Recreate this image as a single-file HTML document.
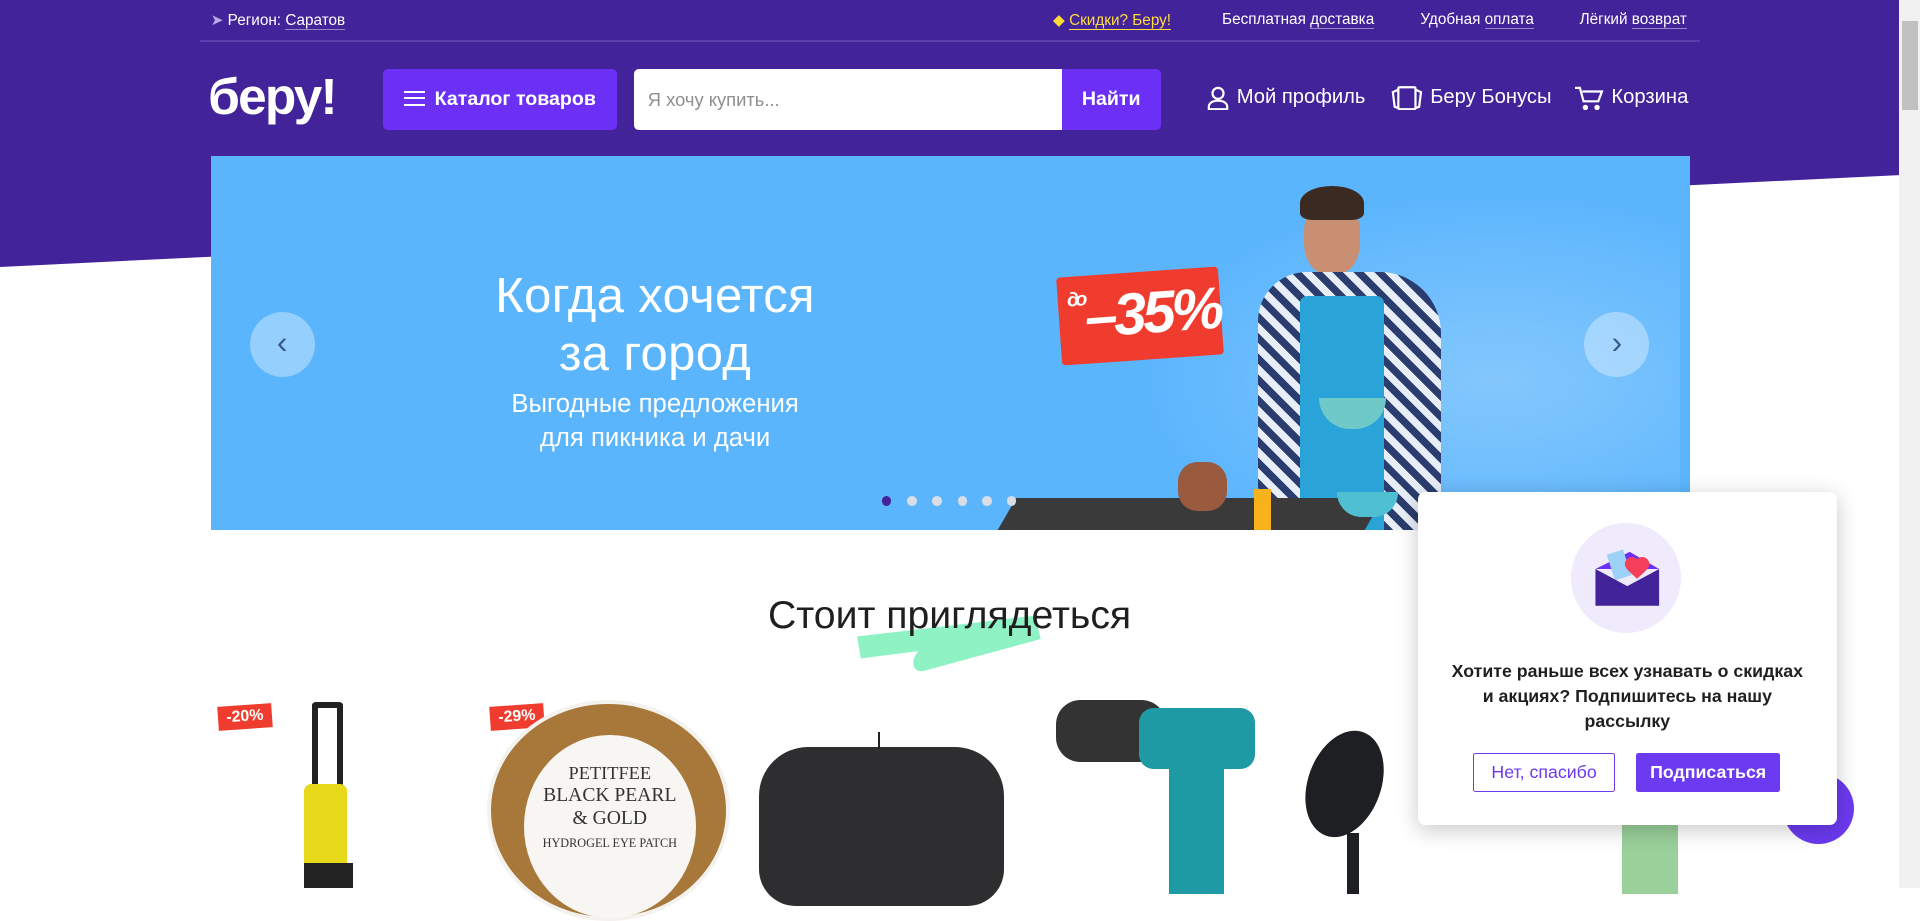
<!DOCTYPE html>
<html><head><meta charset="utf-8"><style>
html{zoom:1.22449}
*{box-sizing:border-box;margin:0;padding:0}
body{width:1568px;height:725px;overflow:hidden;background:#fff;font-family:"Liberation Sans","DejaVu Sans",sans-serif;position:relative;color:#fff}
.abs{position:absolute}
.purple{left:0;top:0;width:1551px;height:220px;background:#42239a;clip-path:polygon(0 0,100% 0,100% 143px,0 218px)}
.top{top:9px;font-size:12.5px;white-space:nowrap}
.top u{text-decoration:none;border-bottom:1px solid rgba(255,255,255,.45)}
.nav{top:70px;font-size:16.5px;display:flex;align-items:center;gap:6px;white-space:nowrap}
.dot{width:8px;height:8px;border-radius:50%;background:#d9dde4;top:405px}
.arrow{width:53px;height:53px;border-radius:50%;background:rgba(255,255,255,.35);top:255px;color:#3c5b8c;font-size:26px;text-align:center;line-height:50px}
</style></head><body>
<div class="abs purple"></div>
<div class="abs" style="left:163px;top:33px;width:1225px;height:1px;background:#5a3ead"></div>

<div class="abs top" style="left:172px"><span style="color:#b9a9e6">➤</span> Регион: <u>Саратов</u></div>
<div class="abs top" style="left:860px;color:#ffdc3c"><span>◆</span> <u style="border-color:#ffdc3c">Скидки? Беру!</u></div>
<div class="abs top" style="left:998px">Бесплатная <u>доставка</u></div>
<div class="abs top" style="left:1160px">Удобная <u>оплата</u></div>
<div class="abs top" style="left:1290px">Лёгкий <u>возврат</u></div>

<div class="abs" style="left:170px;top:54px;font-size:42px;font-weight:bold;letter-spacing:-1.5px">беру!</div>
<div class="abs" style="left:313px;top:56px;width:191px;height:50px;background:#6c2ff6;border-radius:4px;font-size:16px;font-weight:bold;line-height:50px;padding-left:17px">
<span style="display:inline-block;width:17px;height:12px;border-top:2px solid #fff;border-bottom:2px solid #fff;position:relative;vertical-align:-1px;margin-right:8px"><i style="position:absolute;left:0;top:3px;width:17px;height:2px;background:#fff"></i></span>Каталог товаров</div>
<div class="abs" style="left:518px;top:56px;width:350px;height:50px;background:#fff;border-radius:4px 0 0 4px;color:#8f8f8f;font-size:15px;line-height:50px;padding-left:11px">Я хочу купить...</div>
<div class="abs" style="left:867px;top:56px;width:81px;height:50px;background:#6c2ff6;border-radius:0 4px 4px 0;font-size:16px;font-weight:bold;line-height:50px;text-align:center">Найти</div>

<div class="abs nav" style="left:986px"><svg width="18" height="20" viewBox="0 0 18 20" fill="none" stroke="#fff" stroke-width="1.8"><circle cx="9" cy="6" r="4.5"/><path d="M1.5 19v-2c0-3 3-5 7.5-5s7.5 2 7.5 5v2z"/></svg>Мой профиль</div>
<div class="abs nav" style="left:1136px"><svg width="26" height="20" viewBox="0 0 26 20" fill="none" stroke="#fff" stroke-width="1.8"><rect x="6" y="1" width="14" height="18" rx="1"/><path d="M6 3L1.5 5l1.5 12 3 1M20 3l4.5 2-1.5 12-3 1"/></svg>Беру Бонусы</div>
<div class="abs nav" style="left:1286px"><svg width="24" height="20" viewBox="0 0 24 20" fill="none" stroke="#fff" stroke-width="1.8"><path d="M0 1.5h4l3 11h12l3-8H6"/><circle cx="8.5" cy="17.5" r="1.3" fill="#fff"/><circle cx="18" cy="17.5" r="1.3" fill="#fff"/></svg>Корзина</div>

<!-- banner -->
<div class="abs" style="left:172px;top:127px;width:1208px;height:306px;background:#5bb5fd;overflow:hidden">
  <div class="abs" style="left:700px;top:0;width:500px;height:306px;background:radial-gradient(ellipse at 70% 60%,rgba(255,255,255,.25),rgba(255,255,255,0) 60%)"></div>
  <div class="abs" style="left:893px;top:35px;width:46px;height:62px;border-radius:45% 45% 40% 40%;background:#c98f72"></div>
  <div class="abs" style="left:890px;top:25px;width:52px;height:28px;border-radius:50% 50% 20% 20%;background:#3a2a22"></div>
  <div class="abs" style="left:855px;top:95px;width:150px;height:211px;border-radius:40px 50px 0 0;background:repeating-linear-gradient(45deg,#2b3d6e 0 6px,#e8eef8 6px 12px)"></div>
  <div class="abs" style="left:890px;top:115px;width:68px;height:191px;background:#2aa3d8;border-radius:6px 6px 0 0"></div>
  <div class="abs" style="left:905px;top:198px;width:55px;height:25px;border-radius:0 0 30px 30px;background:#6fc9c9"></div>
  <div class="abs" style="left:650px;top:280px;width:300px;height:26px;background:#3a3a3a;transform:skewX(-30deg)"></div>
  <div class="abs" style="left:852px;top:272px;width:14px;height:34px;background:#f8b21b"></div>
  <div class="abs" style="left:920px;top:275px;width:50px;height:20px;background:#4fc0d2;border-radius:0 0 20px 20px"></div>
  <div class="abs" style="left:790px;top:250px;width:40px;height:40px;border-radius:40%;background:#9a5a3e"></div>
  <div class="abs" style="left:693px;top:95px;width:132px;height:72px;background:#f03c2e;transform:rotate(-4deg);border-radius:3px"></div>
  <div class="abs" style="left:700px;top:102px;color:#fff;font-weight:bold;font-size:48px;font-style:italic;letter-spacing:-3px;transform:rotate(-4deg)"><span style="font-size:16px;vertical-align:26px">до</span>–35%</div>
  <div class="abs" style="left:0;top:92px;width:726px;text-align:center;font-size:40px;line-height:47px;letter-spacing:.3px">Когда хочется<br>за город</div>
  <div class="abs" style="left:0;top:189px;width:726px;text-align:center;font-size:21px;line-height:28px">Выгодные предложения<br>для пикника и дачи</div>
</div>
<div class="abs arrow" style="left:204px">‹</div>
<div class="abs arrow" style="left:1294px">›</div>
<div class="abs dot" style="left:720px;background:#42239a"></div>
<div class="abs dot" style="left:741px"></div>
<div class="abs dot" style="left:761px"></div>
<div class="abs dot" style="left:782px"></div>
<div class="abs dot" style="left:802px"></div>
<div class="abs dot" style="left:822px"></div>

<svg class="abs" style="left:695px;top:500px" width="160" height="52" viewBox="0 0 160 52"><path d="M5 20 L150 3 L155 22 L60 48 C50 50 48 40 55 32 L8 38 Z" fill="#8ff2c5"/></svg>
<div class="abs" style="left:0;top:485px;width:1551px;text-align:center;font-size:32px;color:#1f1f1f">Стоит приглядеться</div>

<div class="abs" style="left:178px;top:576px;width:44px;height:20px;background:#f03c2e;color:#fff;font-weight:bold;font-size:13px;text-align:center;line-height:20px;transform:rotate(-4deg)">-20%</div>
<div class="abs" style="left:400px;top:576px;width:44px;height:20px;background:#f03c2e;color:#fff;font-weight:bold;font-size:13px;text-align:center;line-height:20px;transform:rotate(-4deg)">-29%</div>
<div class="abs" style="left:255px;top:573px;width:25px;height:70px;border:5px solid #222;border-bottom:none;border-radius:3px"></div>
<div class="abs" style="left:248px;top:640px;width:35px;height:75px;background:#e8d81a;border-radius:6px"></div>
<div class="abs" style="left:248px;top:705px;width:40px;height:20px;background:#222"></div>
<div class="abs" style="left:398px;top:572px;width:198px;height:180px;border-radius:50%;background:#a8783a;border:4px solid #f4f2ee"></div>
<div class="abs" style="left:428px;top:600px;width:140px;height:150px;border-radius:50%;background:#f8f6f2;color:#333;font-family:'Liberation Serif',serif;text-align:center;padding-top:22px;font-size:15px;line-height:18px">PETITFEE<br><span style="font-size:16px">BLACK PEARL<br>&amp; GOLD</span><br><span style="font-size:10px">HYDROGEL EYE PATCH</span></div>
<div class="abs" style="left:620px;top:610px;width:200px;height:130px;border-radius:40px 40px 30px 30px;background:#2e2e30"></div>
<div class="abs" style="left:717px;top:598px;width:2px;height:14px;background:#222"></div>
<div class="abs" style="left:862px;top:572px;width:90px;height:50px;border-radius:20px;background:#333"></div>
<div class="abs" style="left:930px;top:578px;width:95px;height:50px;border-radius:12px;background:#1e9aa4"></div>
<div class="abs" style="left:955px;top:620px;width:45px;height:110px;background:#1e9aa4"></div>
<div class="abs" style="left:1068px;top:595px;width:60px;height:90px;border-radius:50%;background:#1d1f22;transform:rotate(20deg)"></div>
<div class="abs" style="left:1100px;top:680px;width:10px;height:50px;background:#1d1f22"></div>
<div class="abs" style="left:1325px;top:670px;width:45px;height:60px;background:#9ad09a"></div>

<div class="abs" style="left:1456px;top:631px;width:58px;height:58px;border-radius:50%;background:#6c3af0"></div>

<div class="abs" style="left:1158px;top:402px;width:342px;height:272px;background:#fff;border-radius:6px;box-shadow:0 4px 18px rgba(0,0,0,.22)">
  <div class="abs" style="left:125px;top:25px;width:90px;height:90px;border-radius:50%;background:#f0ebfc"></div>
  <svg class="abs" style="left:143px;top:45px" width="56" height="48" viewBox="0 0 56 48"><path d="M2 18 L30 4 L54 18Z" fill="#6b2ff6"/><rect x="14" y="4" width="14" height="22" fill="#9cd2f8" transform="rotate(-18 20 14)"/><path d="M36 10c4-4 10-1 10 4 0 4-6 8-10 12-4-4-10-8-10-12 0-5 6-8 10-4z" fill="#f5405c"/><path d="M2 18 L28 32 L54 18 V48 H2Z" fill="#42239a"/></svg>
  <div class="abs" style="left:0;top:136px;width:342px;text-align:center;color:#1f1f1f;font-size:14.5px;font-weight:bold;line-height:20.5px">Хотите раньше всех узнавать о скидках<br>и акциях? Подпишитесь на нашу<br>рассылку</div>
  <div class="abs" style="left:45px;top:213px;width:116px;height:32px;border:1px solid #6c3af0;border-radius:2px;color:#6c3af0;font-size:14.5px;text-align:center;line-height:30px">Нет, спасибо</div>
  <div class="abs" style="left:178px;top:213px;width:118px;height:32px;background:#6c3af0;border-radius:2px;color:#fff;font-size:14.5px;font-weight:bold;text-align:center;line-height:32px">Подписаться</div>
</div>

<div class="abs" style="left:1551px;top:0;width:17px;height:725px;background:#f1f1f1"></div>
<div class="abs" style="left:1553px;top:17px;width:13px;height:73px;background:#c1c1c1"></div>
</body></html>
